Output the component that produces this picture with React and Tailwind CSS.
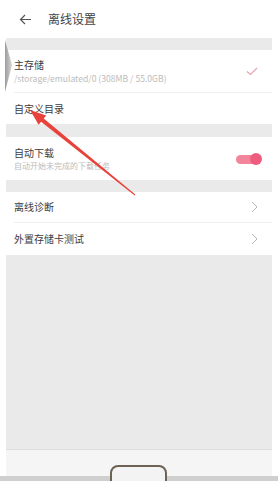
import React from 'react';

const font = { fontFamily: '"Noto Sans CJK SC", "Noto Sans", sans-serif' };

function Chevron() {
  return (
    <svg width="7" height="12" viewBox="0 0 7 12" className="mr-[8px]">
      <path d="M1 1l5 5-5 5" fill="none" stroke="#b5b5b5" strokeWidth="1" />
    </svg>
  );
}

function Row({ title, subtitle, subClass = 'text-[8px]', right, className = '' }) {
  return (
    <div className={`flex items-center justify-between bg-white pl-[8px] pr-[6px] ${className}`}>
      <div className="flex flex-col">
        <span className="text-[10px] leading-[14px] text-[#3c3c3c]">{title}</span>
        {subtitle && <span className={`${subClass} leading-[12px] text-[#bcbcbc]`}>{subtitle}</span>}
      </div>
      {right}
    </div>
  );
}

export default function App() {
  return (
    <div className="relative w-[278px] h-[481px] bg-white overflow-hidden" style={font}>
      {/* header */}
      <div className="flex items-center h-[38px]">
        <svg width="13" height="11" viewBox="0 0 13 11" className="ml-[19px]">
          <path d="M12 5.5H1.5M6 1L1.5 5.5 6 10" fill="none" stroke="#555" strokeWidth="1.2" />
        </svg>
        <span className="ml-[16px] text-[12px] text-[#444]">离线设置</span>
      </div>

      <div className="mx-[6px] bg-[#eaeaea] h-[412px] flex flex-col">
        <div className="h-[12px]" />
        <Row
          className="h-[42px]"
          title="主存储"
          subtitle="/storage/emulated/0 (308MB / 55.0GB)"
          subClass="text-[8.6px]"
          right={
            <svg width="12" height="9" viewBox="0 0 12 9" className="mr-[8px]">
              <path d="M1 4.5l3.5 3L11 1" fill="none" stroke="#e9a0ae" strokeWidth="1.1" />
            </svg>
          }
        />
        <div className="h-px bg-white pl-[8px]"><div className="h-px bg-[#eeeeee]" /></div>
        <Row className="h-[31px]" title="自定义目录" />
        <div className="h-[13px]" />
        <Row
          className="h-[43px]"
          title="自动下载"
          subtitle="自动开始未完成的下载任务"
          right={
            <div className="relative w-[26px] h-[12px] mr-[4px]">
              <div className="absolute left-0 top-[2px] w-[22px] h-[9px] rounded-full bg-[#f2849c]" />
              <div className="absolute right-0 top-0 w-[12px] h-[12px] rounded-full bg-[#ee5d7e]" />
            </div>
          }
        />
        <div className="h-[12px]" />
        <Row className="h-[30px]" title="离线诊断" right={<Chevron />} />
        <div className="h-px bg-white pl-[8px]"><div className="h-px bg-[#eeeeee]" /></div>
        <Row className="h-[32px]" title="外置存储卡测试" right={<Chevron />} />
        <div className="flex-1" />
        <div className="h-px bg-[#dedede]" />
      </div>

      {/* bottom bezel */}
      <div className="h-[26px] mx-[6px] bg-[#f5f5f5]" />
      <div className="h-[5px] bg-[#cfcfcf]" />
      <div className="absolute left-[110px] top-[465px] w-[57px] h-[24px] rounded-[8px] border-[2px] border-[#6e6254] bg-[#f3f3f3]" />

      {/* phone edge reflection + annotation arrow */}
      <svg className="absolute left-0 top-0" width="278" height="481">
        <defs>
          <linearGradient id="edge" x1="0" x2="1" y1="0" y2="0">
            <stop offset="0" stopColor="#9c9c9c" />
            <stop offset="1" stopColor="#d6d6d6" />
          </linearGradient>
        </defs>
        <polygon points="5,40 12,65 5,92" fill="url(#edge)" />
        <polygon
          points="30,110 46.2,115.4 43.7,118.5 135.3,194.6 134.7,195.4 41.1,121.7 38.6,124.8"
          fill="#e8423b"
        />
      </svg>
    </div>
  );
}
